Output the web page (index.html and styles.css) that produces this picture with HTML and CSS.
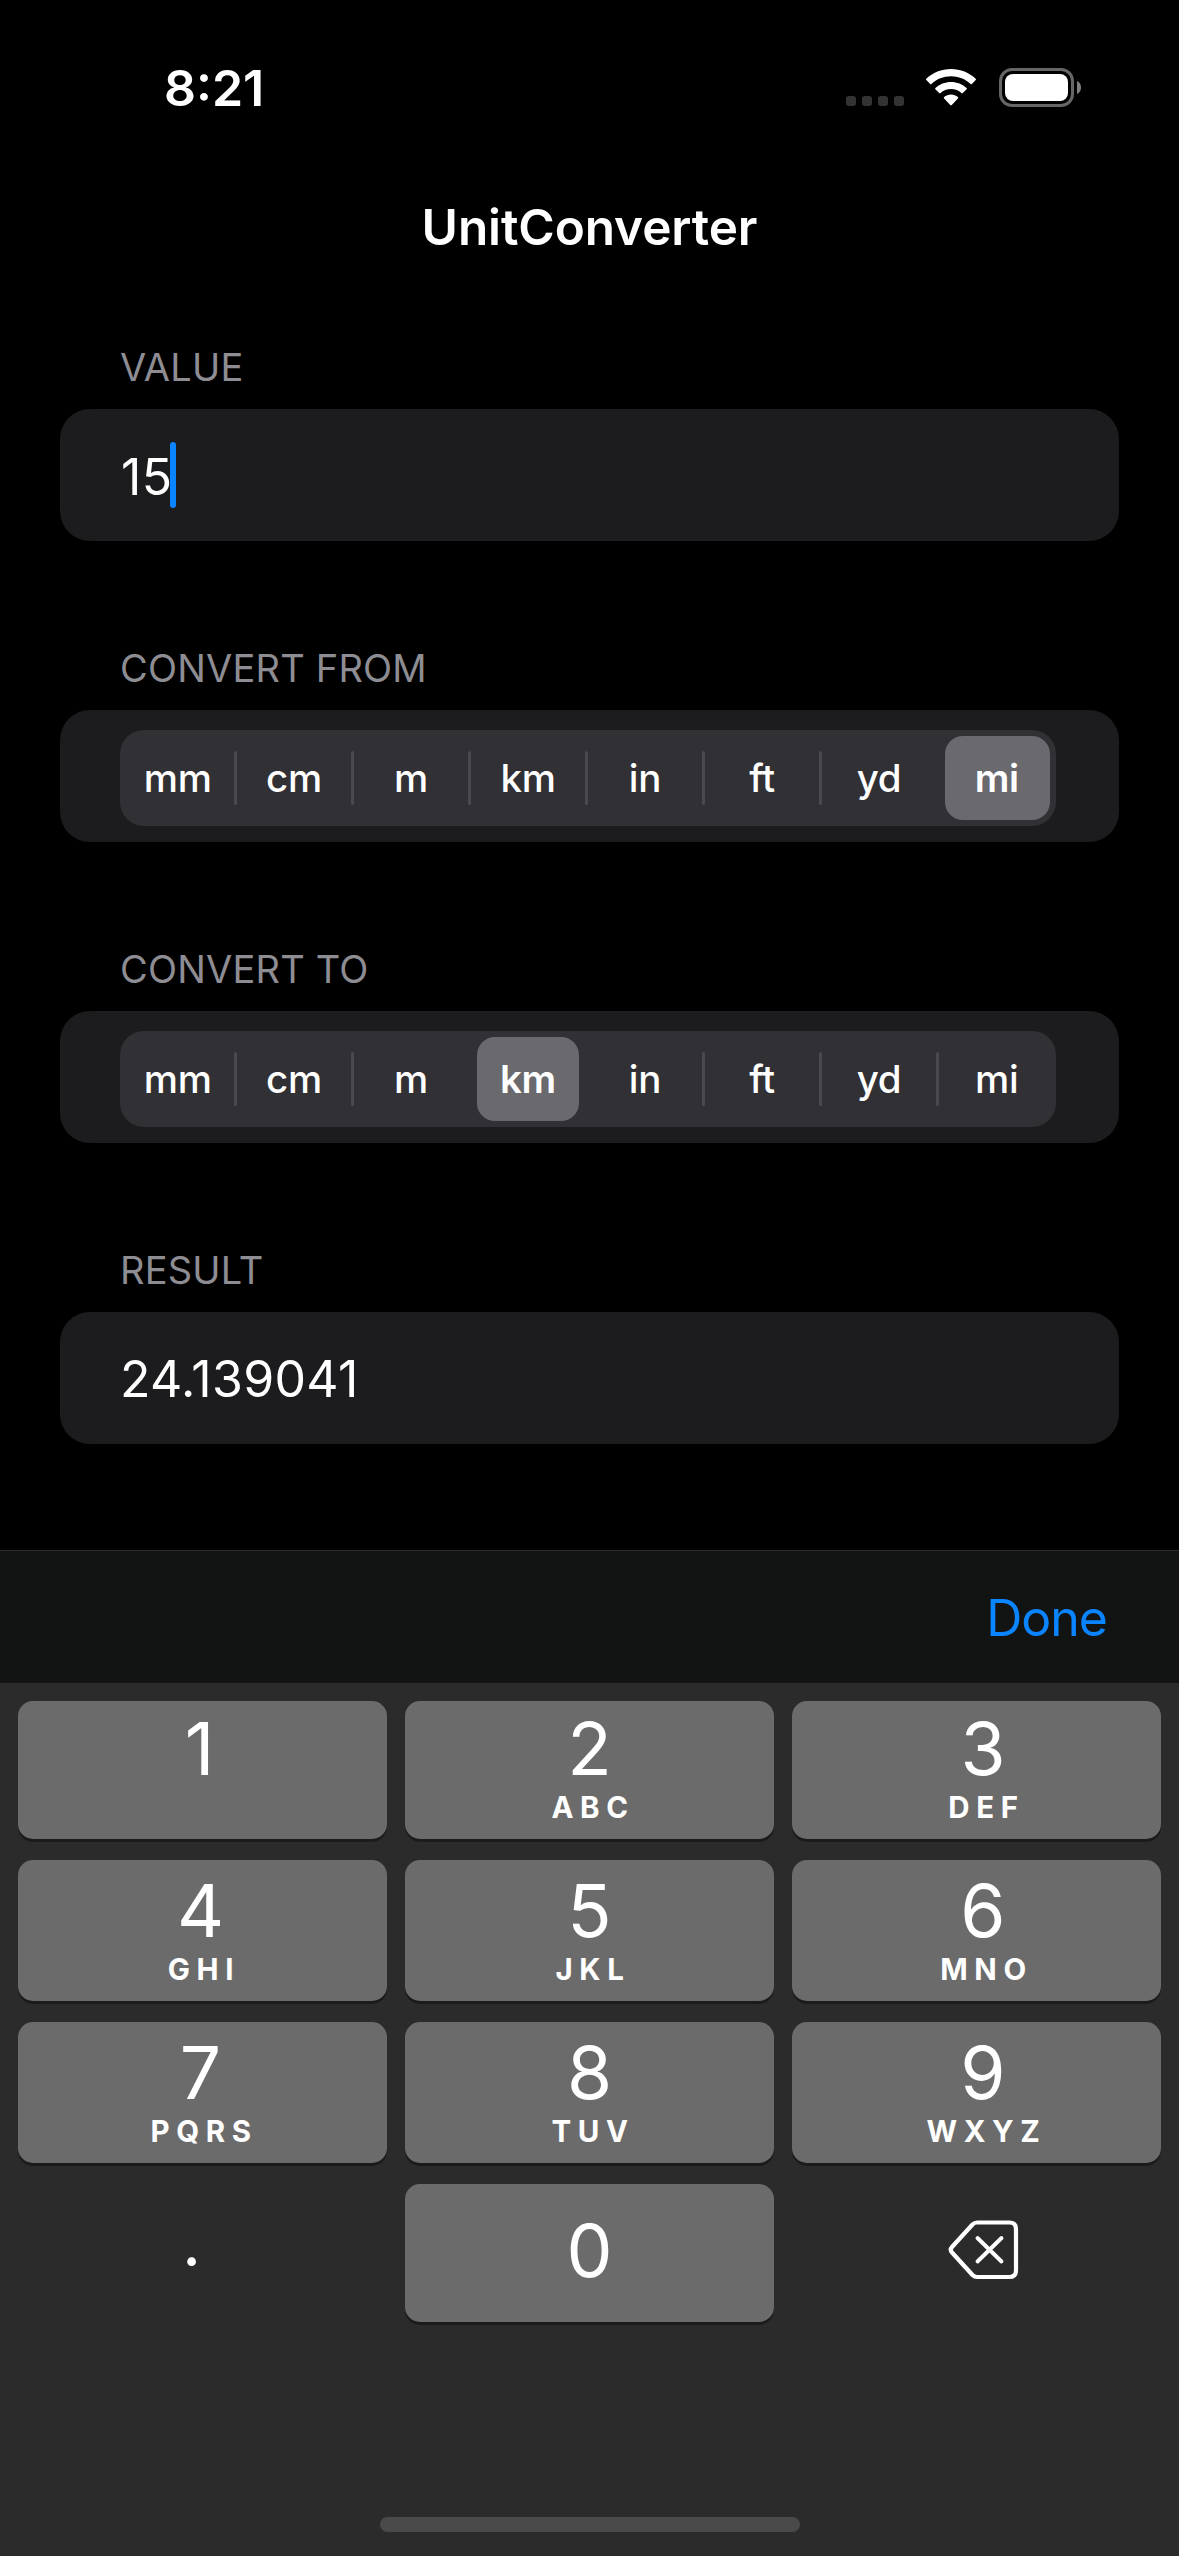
FILE: index.html
```html
<!DOCTYPE html>
<html lang="en">
<head>
<meta charset="utf-8">
<title>UnitConverter</title>
<link rel="stylesheet" href="styles.css">
</head>
<body>
<div class="screen">
  <header class="status">
    <span class="time">8:21</span>
    <div class="indicators">
      <div class="cell"><i></i><i></i><i></i><i></i></div>
      <svg class="wifi" width="52" height="40" viewBox="0 0 52 40">
        <g fill="#fff">
          <path d="M26 1C16.500 1 7.700 4.700 1.300 10.700Q0.600 11.400 1.300 12.100L5.100 15.900Q5.700 16.500 6.400 15.900C11.600 11.100 18.400 8.300 26 8.300S40.400 11.100 45.600 15.900Q46.300 16.500 46.900 15.900L50.700 12.100Q51.400 11.400 50.700 10.700C44.300 4.700 35.500 1 26 1Z"/>
          <path d="M26 13.900C20 13.900 14.500 16.200 10.400 19.900Q9.700 20.600 10.400 21.300L14.200 25.100Q14.900 25.700 15.600 25.100C18.300 22.600 22 21.100 26 21.100S33.700 22.600 36.400 25.100Q37.100 25.700 37.800 25.100L41.600 21.300Q42.300 20.600 41.600 19.900C37.500 16.200 32 13.900 26 13.900Z"/>
          <path d="M26 26.600C23.400 26.600 21 27.500 19.100 29Q18.400 29.700 19.100 30.400L25.200 36.900Q26 37.700 26.800 36.900L32.900 30.400Q33.600 29.700 32.900 29C31 27.500 28.600 26.600 26 26.600Z"/>
        </g>
      </svg>
      <svg class="battery" width="84" height="40" viewBox="0 0 84 40">
        <rect x="1.500" y="1.500" width="72" height="36" rx="11.500" fill="none" stroke="#666" stroke-width="3"/>
        <rect x="6" y="6" width="63" height="27" rx="8" fill="#fff"/>
        <path d="M78 13C80.500 14 82 16.500 82 19.500S80.500 25 78 26Z" fill="#808080"/>
      </svg>
    </div>
  </header>
  <h1 class="title">UnitConverter</h1>

  <main class="form">
    <section class="group">
      <h2 class="label">VALUE</h2>
      <div class="card"><span class="entry">15</span><span class="caret"></span></div>
    </section>
    <section class="group">
      <h2 class="label">CONVERT FROM</h2>
      <div class="card">
        <div class="segments">
          <span>mm</span><span>cm</span><span>m</span><span>km</span><span>in</span><span>ft</span><span class="before">yd</span><span class="on">mi</span>
        </div>
      </div>
    </section>
    <section class="group">
      <h2 class="label">CONVERT TO</h2>
      <div class="card">
        <div class="segments">
          <span>mm</span><span>cm</span><span class="before">m</span><span class="on">km</span><span>in</span><span>ft</span><span>yd</span><span>mi</span>
        </div>
      </div>
    </section>
    <section class="group">
      <h2 class="label">RESULT</h2>
      <div class="card"><span class="result">24.139041</span></div>
    </section>
  </main>

  <div class="toolbar"><span class="done">Done</span></div>
  <div class="keyboard">
    <div class="keys">
      <div class="key left one"><b>1</b><small></small></div>
      <div class="key"><b>2</b><small>ABC</small></div>
      <div class="key right"><b>3</b><small>DEF</small></div>
      <div class="key left"><b>4</b><small>GHI</small></div>
      <div class="key"><b>5</b><small>JKL</small></div>
      <div class="key right"><b>6</b><small>MNO</small></div>
      <div class="key left"><b>7</b><small>PQRS</small></div>
      <div class="key"><b>8</b><small>TUV</small></div>
      <div class="key right"><b>9</b><small>WXYZ</small></div>
      <div class="key plain point"><b>.</b></div>
      <div class="key zero"><b>0</b></div>
      <div class="key plain delete">
        <svg width="72" height="60" viewBox="0 0 72 60" fill="none" stroke="#fff" stroke-width="4.200" stroke-linecap="round" stroke-linejoin="round">
          <path d="M29 2.500H61.500Q68 2.500 68 9V50.500Q68 57 61.500 57H29Q26.500 57 24.500 55L4 32.500Q1.500 29.700 4 27L24.500 4.500Q26.500 2.500 29 2.500Z"/>
          <path d="M29.500 18L53.500 41.500M53.500 18L29.500 41.500" stroke-width="3.900"/>
        </svg>
      </div>
    </div>
    <div class="home"></div>
  </div>
</div>
</body>
</html>
```
FILE: styles.css
```css
* { box-sizing: border-box; }

body {
  margin: 0;
  background: #000;
  color: #fff;
  font-family: Inter, "Liberation Sans", sans-serif;
}

.screen {
  width: 1179px;
  height: 2556px;
  display: flex;
  flex-direction: column;
  overflow: hidden;
}

/* Status bar */
.status {
  height: 176px;
  padding: 0 96px 0 164px;
  display: flex;
  justify-content: space-between;
}
.time {
  font-size: 50px;
  font-weight: 600;
  line-height: 176px;
}
.indicators { display: flex; padding-top: 68px; }
.cell { display: flex; gap: 6px; padding-top: 28px; margin-right: 21px; }
.cell i { width: 10px; height: 10px; border-radius: 3px; background: #333; }
.wifi { margin-right: 22px; }

.title {
  margin: 0;
  height: 102px;
  font-size: 49.5px;
  font-weight: 600;
  line-height: 102px;
  letter-spacing: -0.1px;
  text-align: center;
}

/* Form */
.form {
  height: 1272px;
  padding: 59px 60px 0;
  display: flex;
  flex-direction: column;
  gap: 97px;
}
.label {
  margin: 0 0 12px;
  padding-left: 60px;
  font-size: 38px;
  font-weight: 400;
  line-height: 60px;
  letter-spacing: 0.2px;
  color: #8d8d93;
}
.card {
  height: 132px;
  padding: 0 63px 0 60px;
  border-radius: 30px;
  background: #1c1c1e;
  display: flex;
  align-items: center;
}
.entry, .result { font-size: 50px; line-height: 64px; padding-top: 2px; }
.entry { padding: 3px 0 0 1px; letter-spacing: 0.4px; }
.result { letter-spacing: 0.3px; }
.caret { width: 6px; height: 66px; margin-left: -3px; border-radius: 3px; background: #0a84ff; }

.segments {
  width: 936px;
  height: 96px;
  margin-top: 4px;
  border-radius: 24px;
  background: #313035;
  display: grid;
  grid-template-columns: 115.5px repeat(6, 117px) 118.5px;
  align-items: center;
}
.segments span {
  position: relative;
  z-index: 0;
  font-size: 38.500px;
  font-weight: 450;
  line-height: 96px;
  letter-spacing: -0.3px;
  text-align: center;
}
.segments span:not(.before, .on, :last-child)::after {
  content: "";
  position: absolute;
  right: -1.5px;
  top: 21px;
  width: 3px;
  height: 54px;
  border-radius: 1.5px;
  background: #4a4a4e;
}
.segments .on { font-weight: 600; }
.segments .on::before {
  content: "";
  position: absolute;
  z-index: -1;
  inset: 6px 7.5px;
  border-radius: 18px;
  background: #69696e;
}
.segments .on:last-child::before { inset: 6px 6px 6px 7.5px; }

/* Keyboard */
.toolbar {
  height: 133px;
  padding-right: 72px;
  border-top: 1px solid #2a2a2a;
  background: #121413;
  text-align: right;
}
.done { font-size: 50px; line-height: 134px; letter-spacing: -1px; color: #0a84ff; }
.keyboard {
  flex: 1;
  padding: 18px 18px 24px;
  background: #2b2b2b;
  display: flex;
  flex-direction: column;
  justify-content: space-between;
  align-items: center;
}
.keys {
  width: 1143px;
  display: grid;
  grid-template-columns: repeat(3, 369px);
  grid-template-rows: 138px 141px 141px 138px;
  gap: 21px 18px;
}
.key {
  border-radius: 15px;
  background: #6b6b6b;
  box-shadow: 0 3px 0 #1b1b1b;
  display: flex;
  flex-direction: column;
  align-items: center;
  justify-content: flex-end;
  padding-bottom: 14px;
}
.key b { font-size: 73px; font-weight: 390; line-height: 74px; }
.key small {
  height: 36px;
  margin-top: 3px;
  padding-left: 7px;
  font-size: 29.500px;
  font-weight: 650;
  line-height: 36px;
  letter-spacing: 6.6px;
}
.left { padding-right: 4px; }
.one { padding-right: 6px; }
.right { padding-left: 13px; }
.plain { background: none; box-shadow: none; }
.zero { justify-content: center; padding: 0 0 4px; }
.point { justify-content: center; padding: 0 22px 18px 0; }
.point b { font-size: 60px; font-weight: 500; }
.delete { justify-content: center; padding: 0 0 7px 15px; }
.home { width: 420px; height: 15px; border-radius: 7.5px; background: #4a4a4a; }
```
